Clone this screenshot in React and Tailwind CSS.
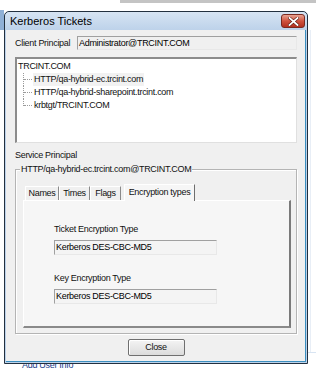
import React from "react";

const font = { fontFamily: '"Liberation Sans", Arial, sans-serif' };

function Field({ children, className = "" }) {
  return (
    <div
      className={
        "border-t border-l border-[#a0a0a0] border-r border-b border-r-[#e8e8e8] border-b-[#e8e8e8] text-black pl-[1px] " +
        className
      }
    >
      {children}
    </div>
  );
}

function TreeChild({ label, last, selected }) {
  return (
    <div className="flex items-center h-[13px]">
      <div className="relative w-[15px] h-[13px] shrink-0">
        <div
          className={
            "absolute left-[5px] top-0 w-0 border-l border-dotted border-[#9a9a9a] " +
            (last ? "h-[7px]" : "h-[13px]")
          }
        />
        <div className="absolute left-[6px] top-[6px] w-[8px] h-0 border-t border-dotted border-[#9a9a9a]" />
      </div>
      <span className={"px-[1px] h-[13px] leading-[13px] " + (selected ? "bg-[#f2f2f2]" : "")}>{label}</span>
    </div>
  );
}

function Tab({ label, active, w }) {
  if (active) {
    return (
      <div className={"relative z-10 h-[17px] -mb-[1px] flex items-start justify-center pt-[2px] bg-[#f6f6f6] border-l border-t border-white border-r border-r-[#6e6e6e] " + w}>
        <span>{label}</span>
      </div>
    );
  }
  return (
    <div className={"h-[14px] flex items-center justify-center border-l border-t border-white border-r border-r-[#8a8a8a] " + w}>
      <span>{label}</span>
    </div>
  );
}

export default function App() {
  return (
    <div
      className="relative w-[316px] h-[385px] bg-white overflow-hidden text-[9px] leading-[11px] tracking-[-0.3px] text-[#111]"
      style={font}
    >
      {/* desktop background bits */}
      <div className="absolute left-[120px] top-0 w-[196px] h-[3px] bg-[#c4c4c4]" />
      <div className="absolute left-0 top-[10px] w-[4px] h-[20px] bg-[#8fb0d6]" />
      <div className="absolute left-[310px] top-[30px] w-[1px] h-[322px] bg-[#e8eef6]" />
      <div className="absolute left-[308px] top-[352px] w-[8px] h-[1px] bg-[#d8e4f2]" />
      <div className="absolute left-[22px] top-[360px] text-[9px] text-[#1a3e8c] leading-[11px]">
        Add User Info
      </div>

      {/* dialog window */}
      <div className="absolute left-[4px] top-[11px] w-[304px] h-[353px] flex flex-col border border-[#22303f] rounded-t-[5px] bg-[#bcd2ea]">
        {/* title bar */}
        <div className="h-[18px] flex items-center justify-between pl-[5px] pr-[2px] bg-gradient-to-b from-[#d6e4f3] to-[#bdd2ea] rounded-t-[5px]">
          <span className="text-[11px] leading-[13px] tracking-normal text-black">Kerberos Tickets</span>
          <div className="w-[24px] h-[14px] rounded-[3px] border border-[#7a2a20] bg-gradient-to-b from-[#e8a393] via-[#d0533f] to-[#b3301f] flex items-center justify-center">
            <svg width="11" height="9" viewBox="0 0 11 9">
              <path d="M1.5 1 L9.5 8 M9.5 1 L1.5 8" stroke="#5a1a12" strokeWidth="3" strokeLinecap="square" />
              <path d="M1.5 1 L9.5 8 M9.5 1 L1.5 8" stroke="#ffffff" strokeWidth="1.8" strokeLinecap="square" />
            </svg>
          </div>
        </div>

        {/* client area */}
        <div className="flex-1 ml-[1px] mr-[1px] mb-[1px] bg-[#f0f0f0] border-r border-b border-[#3b8fc0] flex flex-col pl-[9px] pr-[8px] pt-[6px]">
          {/* Client principal */}
          <div className="flex items-center h-[14px]">
            <span className="w-[62px] shrink-0">Client Principal</span>
            <Field className="flex-1 h-[14px] leading-[12px] bg-[#f0f0f0]">Administrator@TRCINT.COM</Field>
          </div>

          {/* Tree */}
          <div className="mt-[7px] h-[86px] bg-white border-t-2 border-l-2 border-[#8c8c8c] border-r border-b border-r-[#e0e0e0] border-b-[#e0e0e0] pl-[1px] pt-[1px]">
            <div className="h-[13px] leading-[13px] pl-[0px]">TRCINT.COM</div>
            <div className="pl-[0px]">
              <TreeChild label="HTTP/qa-hybrid-ec.trcint.com" selected />
              <TreeChild label="HTTP/qa-hybrid-sharepoint.trcint.com" />
              <TreeChild label="krbtgt/TRCINT.COM" last />
            </div>
          </div>

          {/* Service principal */}
          <div className="mt-[7px] h-[11px]">Service Principal</div>

          {/* Group box */}
          <div className="relative mt-[8px] h-[165px] border border-[#b4b4b4] shadow-[inset_1px_1px_0_#ffffff,1px_1px_0_#ffffff] flex flex-col pl-[7px] pr-[5px] pb-[5px] pt-[14px]">
            <div className="absolute left-[4px] -top-[6px] px-[1px] bg-[#f0f0f0] leading-[11px]">
              HTTP/qa-hybrid-ec.trcint.com@TRCINT.COM
            </div>

            {/* tabs */}
            <div className="flex items-end h-[16px] pl-[2px]">
              <Tab label="Names" w="w-[34px]" />
              <Tab label="Times" w="w-[31px]" />
              <Tab label="Flags" w="w-[31px]" />
              <div className="w-[3px]" />
              <Tab label="Encryption types" active w="w-[71px]" />
            </div>

            {/* tab panel */}
            <div className="flex-1 bg-[#f6f6f6] border-t border-l border-white border-r-2 border-b-2 border-r-[#7a7a7a] border-b-[#8a8a8a] flex flex-col pl-[30px] pt-[23px]">
              <div className="h-[11px]">Ticket Encryption Type</div>
              <Field className="mt-[5px] w-[163px] h-[15px] leading-[13px] bg-[#f4f4f4]">Kerberos DES-CBC-MD5</Field>
              <div className="mt-[18px] h-[11px]">Key Encryption Type</div>
              <Field className="mt-[5px] w-[163px] h-[15px] leading-[13px] bg-[#f4f4f4]">Kerberos DES-CBC-MD5</Field>
            </div>
          </div>

          {/* Close button */}
          <div className="mt-[5px] flex justify-center">
            <div className="w-[57px] h-[17px] border border-[#6f6f6f] rounded-[2px] bg-gradient-to-b from-[#f4f4f4] to-[#dcdcdc] shadow-[inset_1px_1px_0_#ffffff] flex items-center justify-center">
              Close
            </div>
          </div>
        </div>
      </div>
    </div>
  );
}
